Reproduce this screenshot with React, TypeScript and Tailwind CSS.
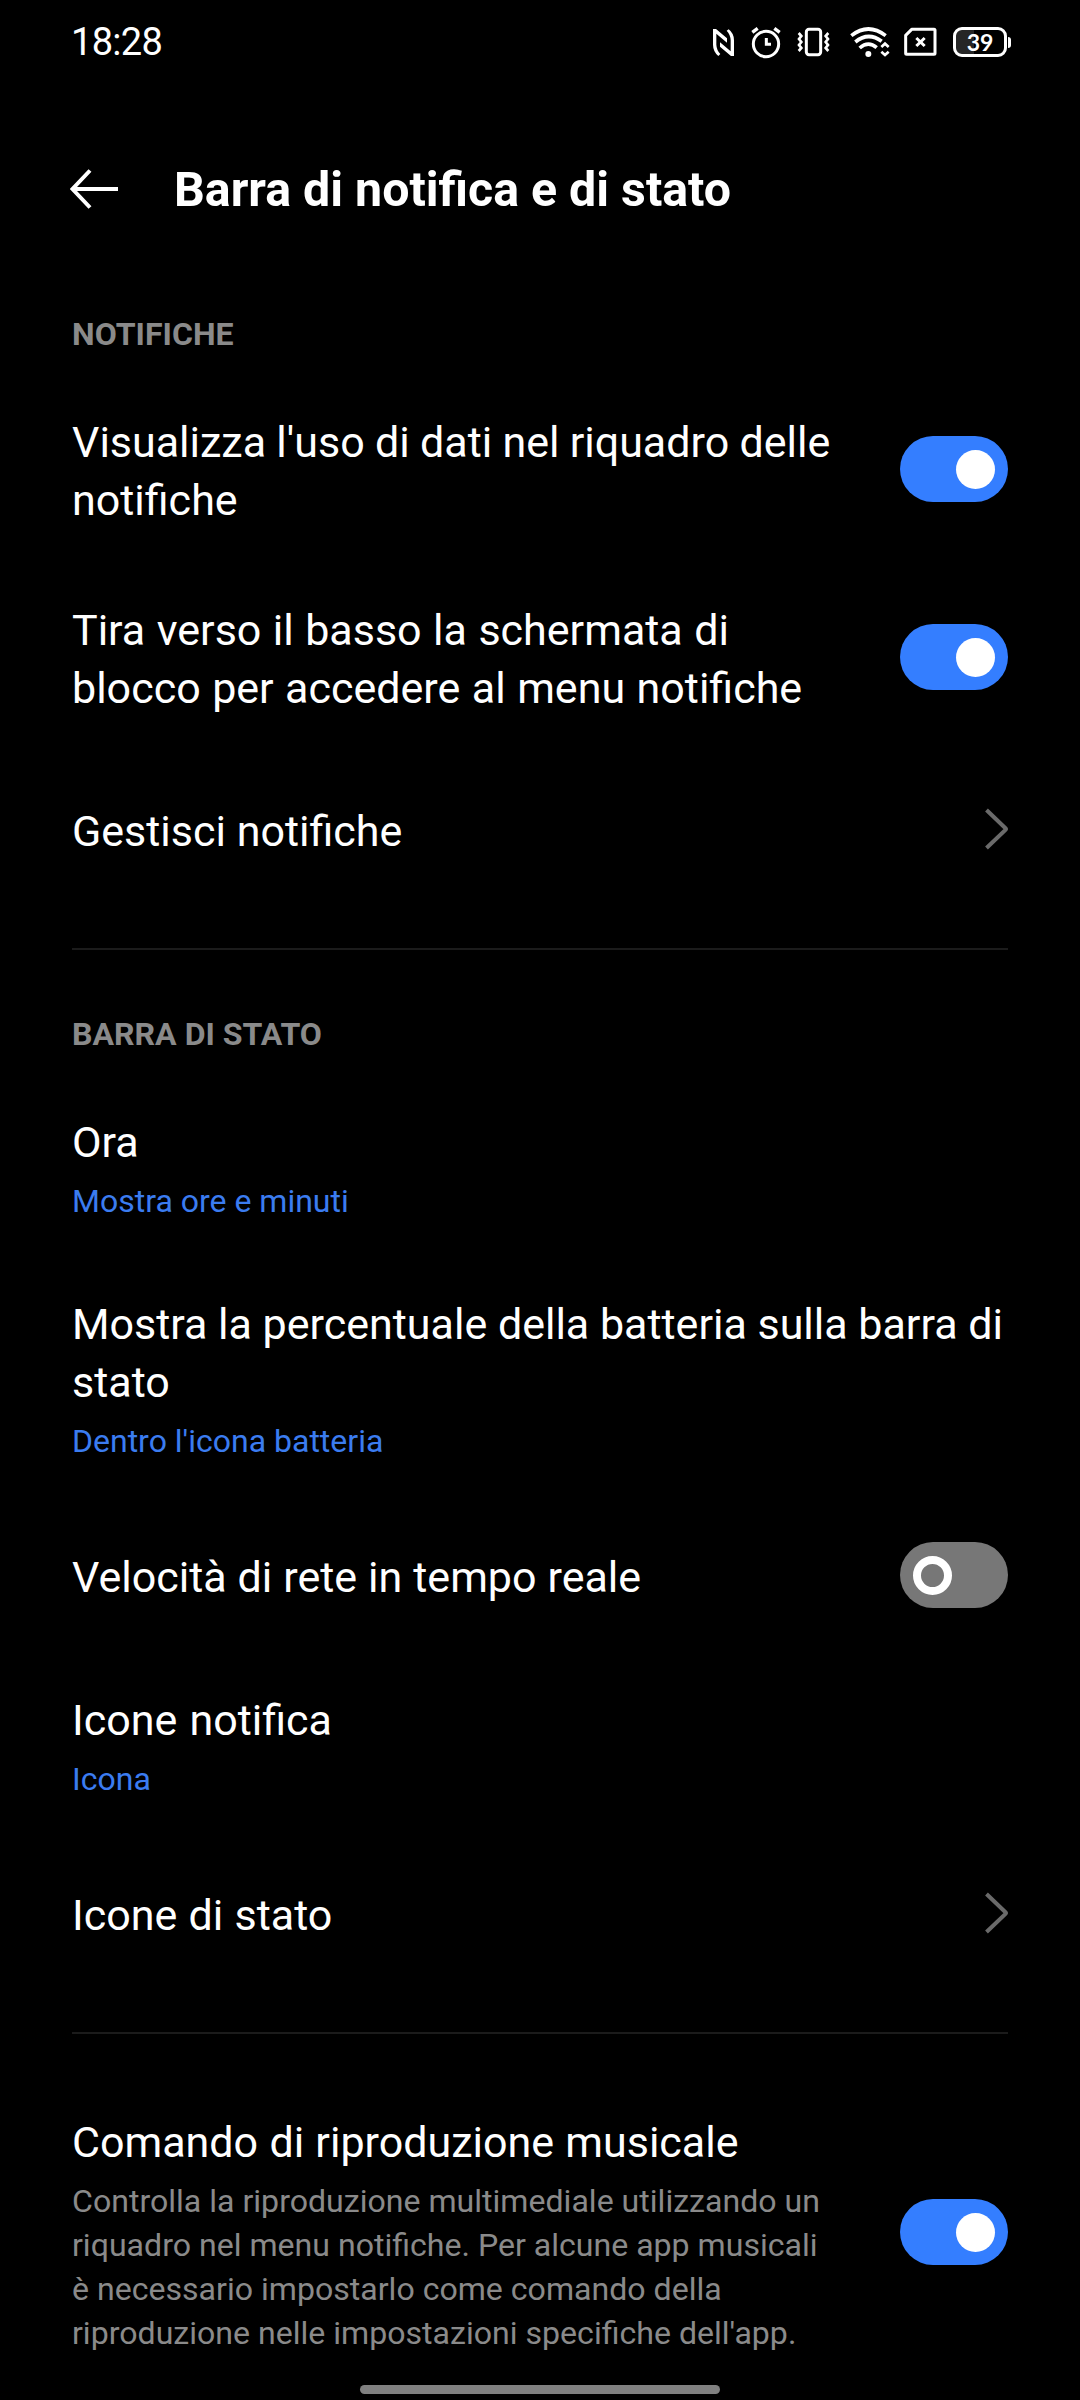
import type { ReactNode } from "react";

function Toggle({ on = false }: { on?: boolean }) {
  return on ? (
    <button role="switch" aria-checked="true" className="flex h-[66px] w-[108px] shrink-0 items-center justify-end rounded-full bg-[#347eff] px-[13px]">
      <span className="h-[39px] w-[39px] rounded-full bg-white" />
    </button>
  ) : (
    <button role="switch" aria-checked="false" className="flex h-[66px] w-[108px] shrink-0 items-center rounded-full bg-[#777777] px-[13px]">
      <span className="h-[39px] w-[39px] rounded-full border-8 border-white" />
    </button>
  );
}

function Chevron() {
  return (
    <svg className="h-[42px] w-[24px] shrink-0" viewBox="0 0 24 42" fill="none" stroke="#6a6a6a" strokeWidth="4" strokeLinejoin="round">
      <path d="M2.5 2 L21.5 20.2 Q22.3 21 21.5 21.8 L2.5 40" />
    </svg>
  );
}

type RowProps = { title: string; titleClass?: string; value?: string; note?: string; className?: string; children?: ReactNode };

function Row({ title, titleClass = "", value, note, className = "", children }: RowProps) {
  return (
    <div className={`flex items-center gap-[64px] ${className}`}>
      <div className="flex-1 pt-1">
        <div className={`text-[43px] leading-[58px] text-white ${titleClass}`}>{title}</div>
        {value && <div className="mt-2 text-[32px] leading-[44px] text-[#3b7cf0]">{value}</div>}
        {note && <div className="mt-2 text-[32.1px] leading-[44px] text-[#8a8a8a]">{note}</div>}
      </div>
      {children}
    </div>
  );
}

function SectionTitle({ children }: { children: ReactNode }) {
  return <h2 className="text-[32.1px] font-bold leading-[44px] text-[#8a8a8a]">{children}</h2>;
}

function StatusIcons() {
  return (
    <div className="flex h-[44px] text-white">
      {/* NFC */}
      <svg className="mr-4 h-[44px] w-[22px]" viewBox="69 30 66 132" fill="currentColor">
        <path d="M69 57 H78 L111 85 V98 L79 71 V104 Q80 121 91 132 L85 138 Q69 124 69 104 Z" />
        <path d="M132 138 H123 L90 110 V97 L122 124 V91 Q121 73 110 62 L116 58 Q132 70 132 91 Z" />
      </svg>
      {/* Alarm */}
      <svg className="mr-4 h-[44px] w-[30px]" viewBox="183 30 90 132" fill="none" stroke="currentColor" strokeWidth="9">
        <circle cx="228" cy="102" r="38" />
        <path d="M229 84 V103 H243" />
        <path d="M187 67 L203 55 M269 67 L253 55" strokeWidth="10" />
      </svg>
      {/* Vibrate */}
      <svg className="mr-[20px] h-[44px] w-[33px]" viewBox="321 30 99 132" fill="none" stroke="currentColor" strokeWidth="9">
        <rect x="349" y="58" width="43" height="76" rx="8" />
        <path d="M326 69 L334 78 L327 87 L334 96 L327 105 L334 114 L326 123" strokeWidth="8" />
        <path d="M415 69 L407 78 L414 87 L407 96 L414 105 L407 114 L415 123" strokeWidth="8" />
      </svg>
      {/* Wi-Fi with traffic arrows */}
      <svg className="mr-[14px] h-[44px] w-[40px]" viewBox="479 30 120 132" fill="none" stroke="currentColor" strokeWidth="11">
        <path d="M483 77 Q534 37 586 77" />
        <path d="M495 96 Q534 64 574 94" />
        <path d="M508 114 Q534 91 559 113" />
        <circle cx="534" cy="132" r="9" fill="currentColor" stroke="none" />
        <path d="M573 111 L584 101 L595 111 M573 125 L584 135 L595 125" strokeWidth="8" />
      </svg>
      {/* SIM without service */}
      <svg className="mr-[15px] h-[44px] w-[34px]" viewBox="641 30 102 132" fill="none" stroke="currentColor" strokeWidth="9">
        <path d="M664 58 H731 Q734 58 734 61 V130 Q734 133 731 133 H649 Q646 133 646 130 V76 Z" strokeLinejoin="round" />
        <path d="M678 84 L703 108 M703 84 L678 108" />
      </svg>
      {/* Battery */}
      <div className="mt-[7px] flex h-[30px] items-center">
        <div className="flex h-[30px] w-[54px] items-center justify-center rounded-[9px] border-[3px] border-white bg-linear-to-r from-[#262626] from-38% to-black to-38%">
          <span className="font-[Lato] text-[23px] font-bold leading-[24px]">39</span>
        </div>
        <div className="ml-px h-[11px] w-[3px] rounded-r-sm bg-white" />
      </div>
    </div>
  );
}

export default function App() {
  return (
    <main className="flex h-[2400px] w-[1080px] flex-col overflow-hidden bg-black font-[Roboto,sans-serif] text-white">
      <div className="flex h-[64px] items-start justify-between pl-[71px] pr-[69px] pt-5">
        <span className="text-[38px] leading-[44px] tracking-[-0.7px]">18:28</span>
        <StatusIcons />
      </div>

      <header className="mt-[95px] flex h-[60px] items-center pl-[70px]">
        <svg className="h-[40px] w-[48px]" viewBox="0 0 48 40" fill="none" stroke="white" strokeWidth="4">
          <path d="M48 20 H3 M20 1.5 L2.5 20 L20 38.5" />
        </svg>
        <h1 className="ml-[56px] pt-0.5 text-[48.3px] font-bold leading-[60px]">Barra di notifica e di stato</h1>
      </header>

      <div className="flex flex-col px-[72px]">
        <section className="pt-[93px]">
          <SectionTitle>NOTIFICHE</SectionTitle>
          <Row className="mt-[53px]" titleClass="[word-spacing:-0.4px]" title="Visualizza l'uso di dati nel riquadro delle notifiche">
            <Toggle on />
          </Row>
          <Row className="mt-[68px]" titleClass="[word-spacing:0.8px]" title="Tira verso il basso la schermata di blocco per accedere al menu notifiche">
            <Toggle on />
          </Row>
          <Row className="mt-[81px] h-[62px]" title="Gestisci notifiche">
            <Chevron />
          </Row>
        </section>

        <section className="mt-[88px] border-t-2 border-[#1b1b1b] pt-[62px]">
          <SectionTitle>BARRA DI STATO</SectionTitle>
          <Row className="mt-[53px]" title="Ora" value="Mostra ore e minuti" />
          <Row className="mt-[68px]" title="Mostra la percentuale della batteria sulla barra di stato" value="Dentro l'icona batteria" />
          <Row className="mt-[81px] h-[62px]" titleClass="[word-spacing:0.3px]" title="Velocità di rete in tempo reale">
            <Toggle />
          </Row>
          <Row className="mt-[81px]" titleClass="[word-spacing:1.5px]" title="Icone notifica" value="Icona" />
          <Row className="mt-[81px] h-[62px]" titleClass="[word-spacing:0.6px]" title="Icone di stato">
            <Chevron />
          </Row>
        </section>

        <section className="mt-[88px] border-t-2 border-[#1b1b1b] pt-[75px]">
          <Row
            titleClass="[word-spacing:0.6px]"
            title="Comando di riproduzione musicale"
            note="Controlla la riproduzione multimediale utilizzando un riquadro nel menu notifiche. Per alcune app musicali è necessario impostarlo come comando della riproduzione nelle impostazioni specifiche dell'app."
          >
            <Toggle on />
          </Row>
        </section>
      </div>

      <div className="mx-auto mt-[30px] h-[9px] w-[360px] shrink-0 rounded-full bg-[#808080]" />
    </main>
  );
}
